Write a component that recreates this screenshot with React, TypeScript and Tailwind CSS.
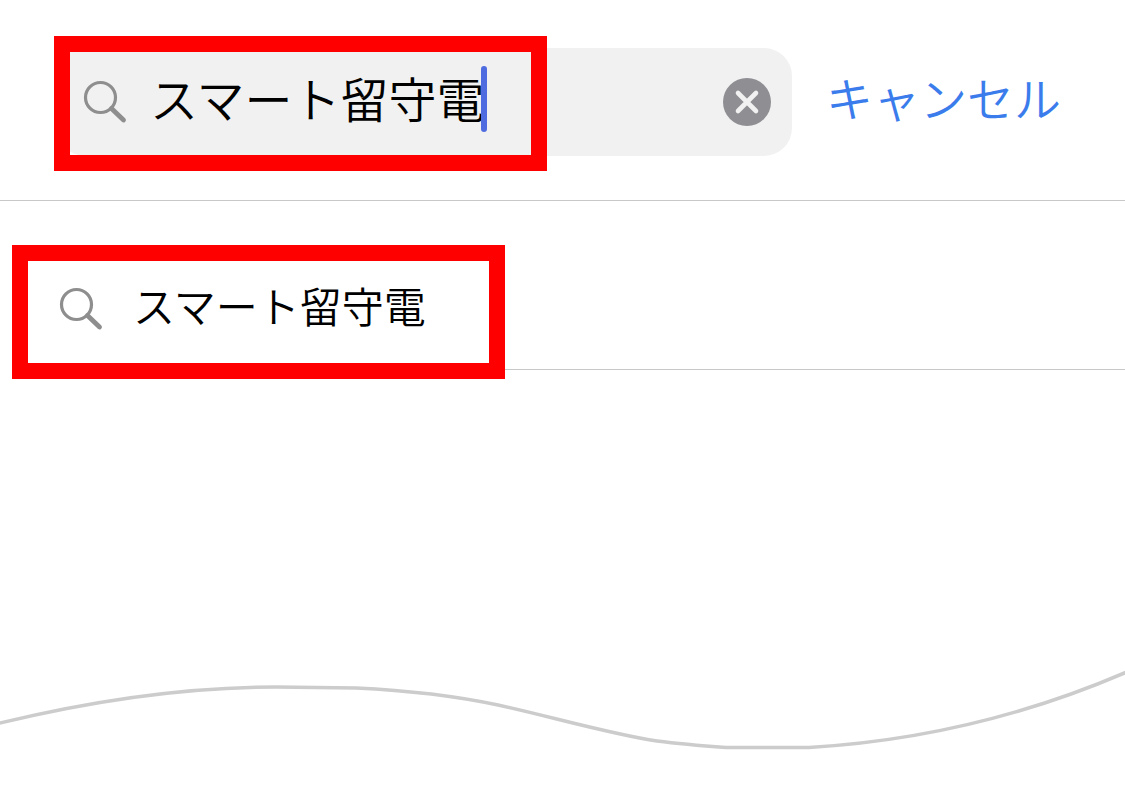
import { useState } from "react";

const suggestions = ["スマート留守電"];

function SearchIcon() {
  return (
    <svg viewBox="0 0 44 44" className="size-11 shrink-0" fill="none" stroke="#8e8e8e" aria-hidden="true">
      <circle cx="17.5" cy="17.5" r="15" strokeWidth="3.2" />
      <path d="M28.5 28.5 L40.5 40" strokeWidth="4.8" strokeLinecap="round" />
    </svg>
  );
}

function ClearIcon() {
  return (
    <svg viewBox="0 0 48 48" className="size-12" aria-hidden="true">
      <circle cx="24" cy="24" r="24" fill="#8e8e93" />
      <path d="M15 15 L33 33 M33 15 L15 33" stroke="#f1f1f1" strokeWidth="4.6" strokeLinecap="round" />
    </svg>
  );
}

export default function App() {
  const [query, setQuery] = useState("スマート留守電");

  return (
    <div className="flex min-h-screen flex-col bg-white font-['Noto_Sans_CJK_JP',sans-serif] font-[350] text-black">
      {/* 検索バー */}
      <header className="flex items-center border-b border-[#c8c8c8] pt-12 pr-16 pb-11 pl-[57px]">
        <form role="search" className="relative flex h-[108px] min-w-0 flex-1 items-center rounded-[28px] bg-[#f1f1f1] pr-[21px] pl-[26px]">
          <SearchIcon />
          <div className="relative ml-[23px] min-w-0 flex-1">
            <input
              type="text"
              aria-label="検索"
              value={query}
              onChange={(e) => setQuery(e.target.value)}
              className="block h-16 w-full bg-transparent pb-2.5 text-[48px] leading-[54px] caret-[#4f6be0] outline-none"
            />
            <span className="absolute -top-1 left-[331px] h-[66px] w-1.5 rounded-full bg-[#4f6be0]" />
          </div>
          <button type="button" aria-label="クリア" onClick={() => setQuery("")}>
            <ClearIcon />
          </button>
          <span className="pointer-events-none absolute -top-3 -left-[3px] h-[135px] w-[493px] border-16 border-[#ff0000]" />
        </form>
        <button type="button" className="ml-[34px] shrink-0 pb-2.5 text-[47px] leading-[54px] text-[#3b7cec]">
          キャンセル
        </button>
      </header>

      {/* 検索候補 */}
      <ul>
        {suggestions.map((s) => (
          <li key={s} className="relative ml-[59px] border-b border-[#c8c8c8]">
            <a href="#" className="flex items-center pt-[82px] pb-[34px]">
              <SearchIcon />
              <span className="ml-[30px] pb-2 text-[42px] leading-[44px]">{s}</span>
            </a>
            <span className="pointer-events-none absolute top-11 -left-[47px] h-[134px] w-[493px] border-16 border-[#ff0000]" />
          </li>
        ))}
      </ul>

      {/* 省略を示す波線 */}
      <svg
        viewBox="0 0 1125 100"
        preserveAspectRatio="none"
        className="mt-auto mb-10 h-[100px] w-full"
        fill="none"
        stroke="#cccccc"
        strokeWidth="3.5"
        aria-hidden="true"
      >
        <path d="M-4 63 C90 40 185 26 276 26 L356 27 C420 30 465 37 498 44 C545 54 610 73 657 80 C680 83 705 85 726 86.5 L809 86.5 C920 80 1030 53 1129 10" />
      </svg>
    </div>
  );
}
